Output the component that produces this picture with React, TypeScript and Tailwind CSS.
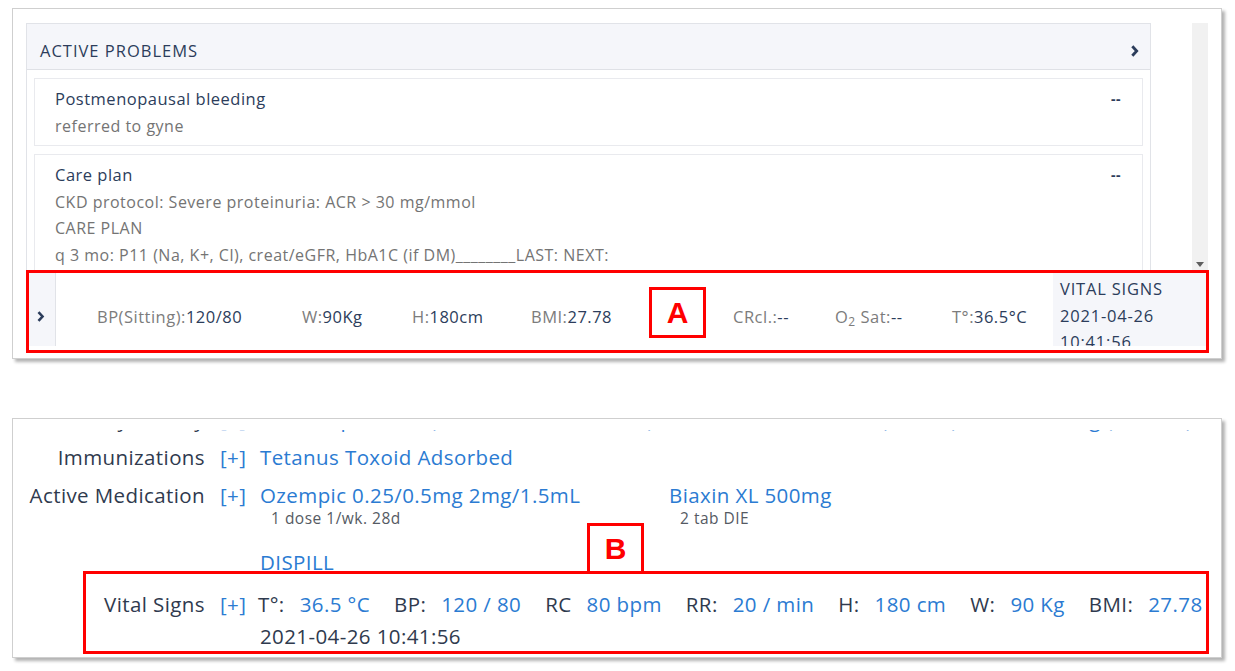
import React from "react"

const FONT = { fontFamily: '"Open Sans", "Liberation Sans", sans-serif' }

const Chevron = ({ className }: { className?: string }) => (
  <svg viewBox="0 0 10 16" className={className} fill="none">
    <path d="M2.5 2.5 L7.5 8 L2.5 13.5" stroke="#2c3d5b" strokeWidth="3.2" />
  </svg>
)

const problems = [
  { title: "Postmenopausal bleeding", lines: ["referred to gyne"] },
  {
    title: "Care plan",
    lines: [
      "CKD protocol: Severe proteinuria: ACR > 30 mg/mmol",
      "CARE PLAN",
      "q 3 mo: P11 (Na, K+, Cl), creat/eGFR, HbA1C (if DM)________LAST: NEXT:",
    ],
  },
]

const ProblemItem = ({ title, lines }: { title: string; lines: string[] }) => (
  <div className="flex justify-between border border-[#e9eaee] bg-white pb-[6px] pl-[20px] pr-[21px] pt-[7px] leading-[26.5px] tracking-[0.5px]">
    <div>
      <div className="text-[16.5px] text-[#2c3d5b]">{title}</div>
      {lines.map((l) => (
        <div key={l} className="text-[16px] text-[#747474]">
          {l}
        </div>
      ))}
    </div>
    <div className="text-[14px] font-bold text-[#2c3d5b]">--</div>
  </div>
)

const VitalCell = ({ w, label, value }: { w: string; label: React.ReactNode; value: string }) => (
  <div className={`${w} shrink-0 whitespace-nowrap text-[16.5px] tracking-[0.5px]`}>
    <span className="text-[#7c7c7c]">{label}</span>
    <span className="text-[#2c3d5b]">{value}</span>
  </div>
)

const ActiveProblemsCard = () => (
  <div className="ml-[12px] mt-[8px] h-[351px] w-[1210px] overflow-hidden border border-[#cfcfcf] bg-white pl-[13px] pt-[14px] shadow-[3px_3px_3px_rgba(0,0,0,0.3)]">
    <div className="flex h-[248px]">
      <div className="flex w-[1125px] flex-col overflow-hidden border-x border-t border-[#e1e3e8]">
        <div className="flex h-[46px] shrink-0 items-center justify-between border-b border-[#dfe1e6] bg-[#f5f6fa] pl-[13px] pr-[11px] pt-[9px]">
          <span className="text-[16.5px] tracking-[1px] text-[#2c3d5b]">ACTIVE PROBLEMS</span>
          <Chevron className="h-[14px] w-[9px]" />
        </div>
        <div className="flex flex-col gap-[8px] px-[7px] pt-[8px]">
          {problems.map((p) => (
            <ProblemItem key={p.title} {...p} />
          ))}
        </div>
      </div>
      <div className="ml-[41px] flex w-[16px] items-end justify-center bg-[#f1f1f1] pb-[4px]">
        <div className="h-0 w-0 border-x-[4px] border-t-[5px] border-x-transparent border-t-[#5f5f5f]" />
      </div>
    </div>
    <div className="h-[75px] w-[1182px] overflow-hidden">
      <div className="flex h-[90px] items-stretch">
        <div className="flex w-[30px] shrink-0 items-center justify-center border-r border-[#e1e3e8] bg-[#f5f6fa] pt-[1px]">
          <Chevron className="h-[13px] w-[9px]" />
        </div>
        <div className="flex flex-1 items-center pl-[41px] pt-[3px]">
          <VitalCell w="w-[205px]" label="BP(Sitting):" value="120/80" />
          <VitalCell w="w-[110px]" label="W:" value="90Kg" />
          <VitalCell w="w-[119px]" label="H:" value="180cm" />
          <VitalCell w="w-[202px]" label="BMI:" value="27.78" />
          <VitalCell w="w-[102px]" label="CRcl.:" value="--" />
          <VitalCell
            w="w-[117px]"
            label={
              <>
                O<sub className="text-[12px]">2</sub> Sat:
              </>
            }
            value="--"
          />
          <VitalCell w="w-[96px]" label="T°:" value="36.5°C" />
        </div>
        <div className="w-[155px] shrink-0 bg-[#f5f6fa] pl-[7px] pt-[5px] text-[16.5px] leading-[26.5px] tracking-[0.8px] text-[#2c3d5b]">
          <div>VITAL SIGNS</div>
          <div>2021-04-26</div>
          <div>10:41:56</div>
        </div>
      </div>
    </div>
  </div>
)

const Plus = () => <span className="text-[#2b7bd2]">[+]</span>

const Med = ({ name, sig }: { name: string; sig?: string }) => (
  <div>
    <div className="leading-[38px] text-[#2b7bd2]">{name}</div>
    {sig && (
      <div className="-mt-[5px] pl-[11px] text-[15.5px] leading-[18px] tracking-[0.5px] text-[#555a63]">{sig}</div>
    )}
  </div>
)

const VitalPair = ({ label, value }: { label: string; value: string }) => (
  <div className="flex gap-[15px] whitespace-nowrap">
    <span className="text-[#2f3a4e]">{label}</span>
    <span className="text-[#2b7bd2]">{value}</span>
  </div>
)

const ChartCard = () => (
  <div className="ml-[12px] mt-[59px] h-[240px] w-[1210px] overflow-hidden border border-[#cfcfcf] bg-white pt-[11px] text-[20.5px] tracking-[0.4px] shadow-[3px_3px_3px_rgba(0,0,0,0.3)]">
    <div className="h-full overflow-hidden">
      <div className="-mt-[30px] grid grid-cols-[192px_55px_1fr] text-[#2f3a4e]">
        <div className="whitespace-nowrap text-right leading-[38px]">Family History</div>
        <div className="pl-[15px] leading-[38px]">
          <Plus />
        </div>
        <div className="whitespace-nowrap leading-[38px] text-[#2b7bd2]">
          Cancer, prostate (Paternal Grandfather) / Pancreatitis, chronic (Father) / Cancer, lung (Mother)
        </div>

        <div className="text-right leading-[38px]">Immunizations</div>
        <div className="pl-[15px] leading-[38px]">
          <Plus />
        </div>
        <div className="leading-[38px] text-[#2b7bd2]">Tetanus Toxoid Adsorbed</div>

        <div className="whitespace-nowrap text-right leading-[38px]">Active Medication</div>
        <div className="pl-[15px] leading-[38px]">
          <Plus />
        </div>
        <div className="grid grid-cols-[409px_1fr] gap-y-[16px]">
          <Med name="Ozempic 0.25/0.5mg 2mg/1.5mL" sig="1 dose 1/wk. 28d" />
          <Med name="Biaxin XL 500mg" sig="2 tab DIE" />
          <Med name="DISPILL" />
        </div>

        <div className="mt-[4px] text-right leading-[38px]">Vital Signs</div>
        <div className="mt-[4px] pl-[15px] leading-[38px]">
          <Plus />
        </div>
        <div className="-ml-[2px] mt-[4px]">
          <div className="flex gap-[24px] leading-[38px]">
            <VitalPair label="T°:" value="36.5 °C" />
            <VitalPair label="BP:" value="120 / 80" />
            <VitalPair label="RC" value="80 bpm" />
            <VitalPair label="RR:" value="20 / min" />
            <VitalPair label="H:" value="180 cm" />
            <VitalPair label="W:" value="90 Kg" />
            <VitalPair label="BMI:" value="27.78" />
          </div>
          <div className="ml-[2px] leading-[26px] text-[#2f3a4e]">2021-04-26 10:41:56</div>
        </div>
      </div>
    </div>
  </div>
)

const Tag = ({ letter, className }: { letter: string; className: string }) => (
  <div
    className={`absolute flex items-center justify-center border-[3px] border-[#ff0000] bg-white text-[30px] font-bold text-[#ff0000] ${className}`}
    style={{ fontFamily: '"Liberation Sans", sans-serif' }}
  >
    {letter}
  </div>
)

export default function App() {
  return (
    <div className="relative h-[671px] w-[1235px] overflow-hidden bg-white" style={FONT}>
      <ActiveProblemsCard />
      <ChartCard />

      {/* annotations */}
      <div className="absolute left-[26px] top-[270px] h-[83px] w-[1183px] border-[3px] border-[#ff0000]" />
      <Tag letter="A" className="left-[649px] top-[287px] h-[51px] w-[57px]" />
      <div className="absolute left-[83px] top-[571px] h-[83px] w-[1126px] border-[3px] border-[#ff0000]" />
      <Tag letter="B" className="left-[587px] top-[523px] h-[51px] w-[57px]" />
    </div>
  )
}
